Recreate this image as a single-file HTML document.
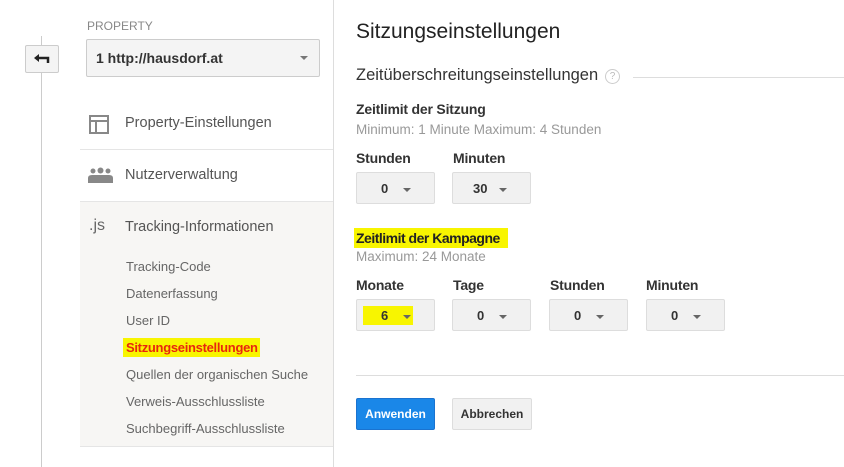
<!DOCTYPE html>
<html><head><meta charset="utf-8"><style>
*{margin:0;padding:0;box-sizing:border-box}
body{width:844px;height:467px;background:#fff;font-family:"Liberation Sans",Arial,sans-serif;position:relative;overflow:hidden;color:#222}
.a{position:absolute;white-space:nowrap}
.sel{position:absolute;width:79px;height:32px;background:#f1f1f1;border:1px solid #ddd;border-radius:2px;font-size:13px;font-weight:bold;color:#333}
.sel span{position:absolute;left:24px;top:8px}
.sel i{position:absolute;left:46px;top:15px;border-left:4px solid transparent;border-right:4px solid transparent;border-top:4px solid #666}
.lbl{position:absolute;font-size:14px;font-weight:bold;color:#333;letter-spacing:-0.2px}
.sub{position:absolute;font-size:13.5px;color:#999}
</style></head><body>
<div class="a" style="left:41px;top:36px;width:1px;height:431px;background:#ccc"></div>
<div class="a" style="left:25px;top:45px;width:34px;height:28px;background:#f4f4f4;border:1px solid #ccc;border-radius:2px"><svg width="34" height="28" style="position:absolute;left:-1px;top:-1px"><path d="M13 13 H23 V18" stroke="#222" stroke-width="2.5" fill="none"/><path d="M9 13 L14 9 V17 Z" fill="#222"/></svg></div>
<div class="a" style="left:333px;top:0;width:1px;height:467px;background:#ddd"></div>
<div class="a" style="left:87px;top:19px;font-size:12px;color:#888">PROPERTY</div>
<div class="a" style="left:86px;top:39px;width:234px;height:38px;background:#f4f4f4;border:1px solid #ccc;border-radius:2px"></div>
<div class="a" style="left:96px;top:50px;font-size:14px;font-weight:bold;color:#333">1 http://hausdorf.at</div>
<div class="a" style="left:300px;top:56px;border-left:4px solid transparent;border-right:4px solid transparent;border-top:4px solid #777"></div>
<div class="a" style="left:89px;top:115px;width:20px;height:19px;border:2px solid #888"></div>
<div class="a" style="left:91px;top:120px;width:16px;height:2px;background:#888"></div>
<div class="a" style="left:95px;top:120px;width:2px;height:12px;background:#888"></div>
<div class="a" style="left:125px;top:115px;font-size:14.5px;color:#555">Property-Einstellungen</div>
<div class="a" style="left:80px;top:149px;width:253px;height:1px;background:#e5e5e5"></div>
<svg class="a" style="left:87px;top:167px" width="27" height="17"><circle cx="6" cy="4" r="2.5" fill="#888"/><circle cx="13.5" cy="3.5" r="3" fill="#888"/><circle cx="21" cy="4" r="2.5" fill="#888"/><path d="M1 16 V11 Q1 8 5 8 H22 Q26 8 26 11 V16 Z" fill="#888"/></svg>
<div class="a" style="left:125px;top:167px;font-size:14.5px;color:#555">Nutzerverwaltung</div>
<div class="a" style="left:80px;top:201px;width:253px;height:246px;background:#f7f6f4;border-top:1px solid #e5e5e5;border-bottom:1px solid #e5e5e5"></div>
<div class="a" style="left:89px;top:217px;font-size:16px;color:#666">.js</div>
<div class="a" style="left:125px;top:219px;font-size:14.5px;color:#555">Tracking-Informationen</div>
<div class="a" style="left:126px;top:259px;font-size:13px;color:#666">Tracking-Code</div>
<div class="a" style="left:126px;top:286px;font-size:13px;color:#666">Datenerfassung</div>
<div class="a" style="left:126px;top:313px;font-size:13px;color:#666">User ID</div>
<div class="a" style="left:123px;top:338px;width:137px;height:19px;background:#f8f500"></div>
<div class="a" style="left:126px;top:340px;font-size:13px;font-weight:bold;color:#e8260e;letter-spacing:-0.3px">Sitzungseinstellungen</div>
<div class="a" style="left:126px;top:367px;font-size:13px;color:#666">Quellen der organischen Suche</div>
<div class="a" style="left:126px;top:394px;font-size:13px;color:#666">Verweis-Ausschlussliste</div>
<div class="a" style="left:126px;top:421px;font-size:13px;color:#666">Suchbegriff-Ausschlussliste</div>
<div class="a" style="left:356px;top:20px;font-size:21px;color:#222">Sitzungseinstellungen</div>
<div class="a" style="left:356px;top:66px;font-size:16.5px;color:#333">Zeitüberschreitungseinstellungen</div>
<div class="a" style="left:605px;top:69px;width:15px;height:15px;border:1px solid #ccc;border-radius:50%;font-size:10px;color:#bbb;text-align:center;line-height:13px">?</div>
<div class="a" style="left:633px;top:77px;width:211px;height:1px;background:#ddd"></div>
<div class="lbl" style="left:356px;top:101px">Zeitlimit der Sitzung</div>
<div class="sub" style="left:356px;top:122px">Minimum: 1 Minute Maximum: 4 Stunden</div>
<div class="lbl" style="left:356px;top:150px">Stunden</div>
<div class="lbl" style="left:453px;top:150px">Minuten</div>
<div class="sel" style="left:356px;top:172px"><span>0</span><i></i></div>
<div class="sel" style="left:452px;top:172px"><span style="left:20px">30</span><i></i></div>
<div class="a" style="left:354px;top:228px;width:154px;height:20px;background:#f8f500"></div>
<div class="lbl" style="left:356px;top:230px;color:#222;letter-spacing:-0.5px">Zeitlimit der Kampagne</div>
<div class="sub" style="left:356px;top:249px">Maximum: 24 Monate</div>
<div class="lbl" style="left:356px;top:277px">Monate</div>
<div class="lbl" style="left:453px;top:277px">Tage</div>
<div class="lbl" style="left:550px;top:277px">Stunden</div>
<div class="lbl" style="left:646px;top:277px">Minuten</div>
<div class="sel" style="left:356px;top:299px"><div class="a" style="left:6px;top:6px;width:50px;height:19px;background:#f8f500"></div><span>6</span><i></i></div>
<div class="sel" style="left:452px;top:299px"><span>0</span><i></i></div>
<div class="sel" style="left:549px;top:299px"><span>0</span><i></i></div>
<div class="sel" style="left:646px;top:299px"><span>0</span><i></i></div>
<div class="a" style="left:356px;top:375px;width:488px;height:1px;background:#ddd"></div>
<div class="a" style="left:356px;top:398px;width:79px;height:32px;background:#1a87e8;border:1px solid #1a73d0;border-radius:2px;color:#fff;font-size:12px;font-weight:bold;text-align:center;line-height:30px">Anwenden</div>
<div class="a" style="left:452px;top:398px;width:80px;height:32px;background:#f1f1f1;border:1px solid #ddd;border-radius:2px;color:#333;font-size:12px;font-weight:bold;text-align:center;line-height:30px">Abbrechen</div>
</body></html>
